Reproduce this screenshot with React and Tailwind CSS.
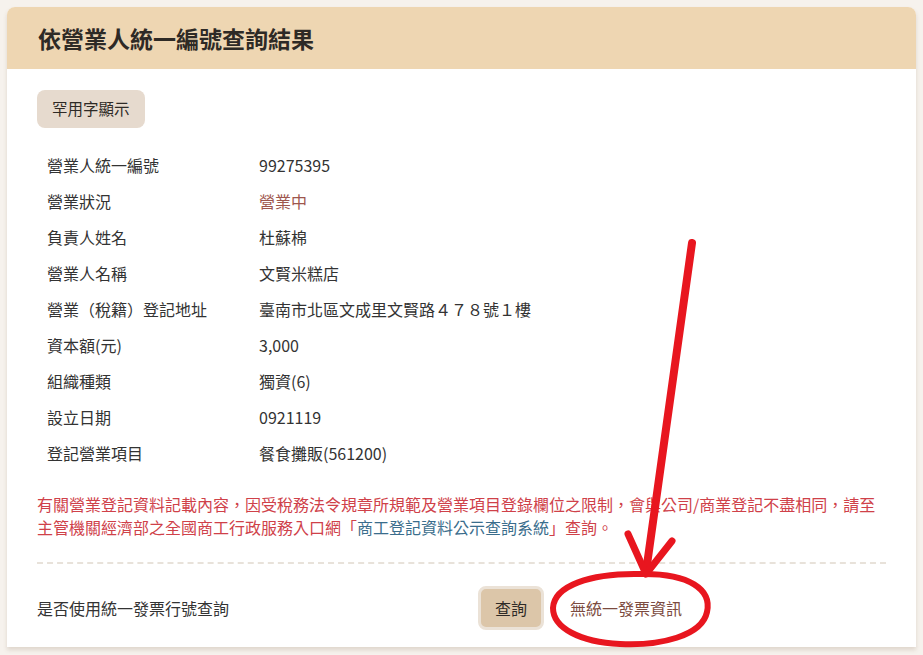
import React from 'react';

const rows = [
    { label: '營業人統一編號', value: '99275395' },
    { label: '營業狀況', value: '營業中', status: true },
    { label: '負責人姓名', value: '杜蘇棉' },
    { label: '營業人名稱', value: '文賢米糕店' },
    { label: '營業（稅籍）登記地址', value: '臺南市北區文成里文賢路４７８號１樓' },
    { label: '資本額(元)', value: '3,000' },
    { label: '組織種類', value: '獨資(6)' },
    { label: '設立日期', value: '0921119' },
    { label: '登記營業項目', value: '餐食攤販(561200)' },
];

// red pen marks drawn on top of the screenshot
const Annotation = () => (
    <svg className="absolute inset-0 pointer-events-none" width="923" height="655" viewBox="0 0 923 655">
        <g fill="none" stroke="#e8161f" strokeLinecap="round" strokeLinejoin="round">
            <path d="M692 243 L646 572" strokeWidth="8" />
            <path d="M628 534 L646 574 L672 541" strokeWidth="7" />
            <path d="M640 574 C 690 573, 712 590, 707 612 C 702 636, 660 646, 620 644 C 580 642, 553 628, 553 608 C 554 586, 590 573, 640 574 Z" strokeWidth="6" />
        </g>
    </svg>
);

const App = () => {
    return (
        <div
            className="relative w-[923px] h-[655px] overflow-hidden bg-[#f6f2ed] pt-[7px] px-[7px]"
            style={{ fontFamily: '"Noto Sans CJK TC", "Noto Sans", sans-serif' }}
        >
            <div className="bg-white rounded-t-lg shadow-[0_3px_4px_rgba(120,90,60,0.18)]">
                {/* Header */}
                <div className="h-[62px] bg-[#eed6b2] rounded-t-lg flex items-center px-[31px]">
                    <h1 className="text-[23px] font-bold text-[#2e2a26]">依營業人統一編號查詢結果</h1>
                </div>

                <div className="px-[30px] pt-[21px] pb-[17px]">
                    <button className="h-[38px] px-[15px] rounded-lg bg-[#e6dace] text-[15.5px] text-[#2e2a26]">
                        罕用字顯示
                    </button>

                    {/* Result table */}
                    <div className="mt-[19px] pl-[10px]">
                        {rows.map((row) => (
                            <div key={row.label} className="flex items-center h-[36px] text-[16px]">
                                <div className="w-[212px] text-[#333]">{row.label}</div>
                                <div className={row.status ? 'text-[#9e564d]' : 'text-[#333]'}>{row.value}</div>
                            </div>
                        ))}
                    </div>

                    <p className="mt-[22px] text-[16px] leading-[23px] text-[#cf4149]">
                        有關營業登記資料記載內容，因受稅務法令規章所規範及營業項目登錄欄位之限制，會與公司/商業登記不盡相同，請至主管機關經濟部之全國商工行政服務入口網「<span className="text-[#3a6d8c]">商工登記資料公示查詢系統</span>」查詢。
                    </p>

                    <div className="mt-[23px] border-t-2 border-dashed border-[#e8e2da]" />

                    <div className="mt-[22px] flex items-center">
                        <div className="w-[441px] text-[16px] text-[#333]">是否使用統一發票行號查詢</div>
                        <button className="h-[44px] px-[14px] rounded-lg bg-[#dcc6a9] border-[3px] border-[#ebe2d7] text-[16px] text-[#2e2a26]">
                            查詢
                        </button>
                        <span className="ml-[26px] text-[16px] text-[#7c4b40]">無統一發票資訊</span>
                    </div>
                </div>
            </div>

            <Annotation />
        </div>
    );
};

export default App;
